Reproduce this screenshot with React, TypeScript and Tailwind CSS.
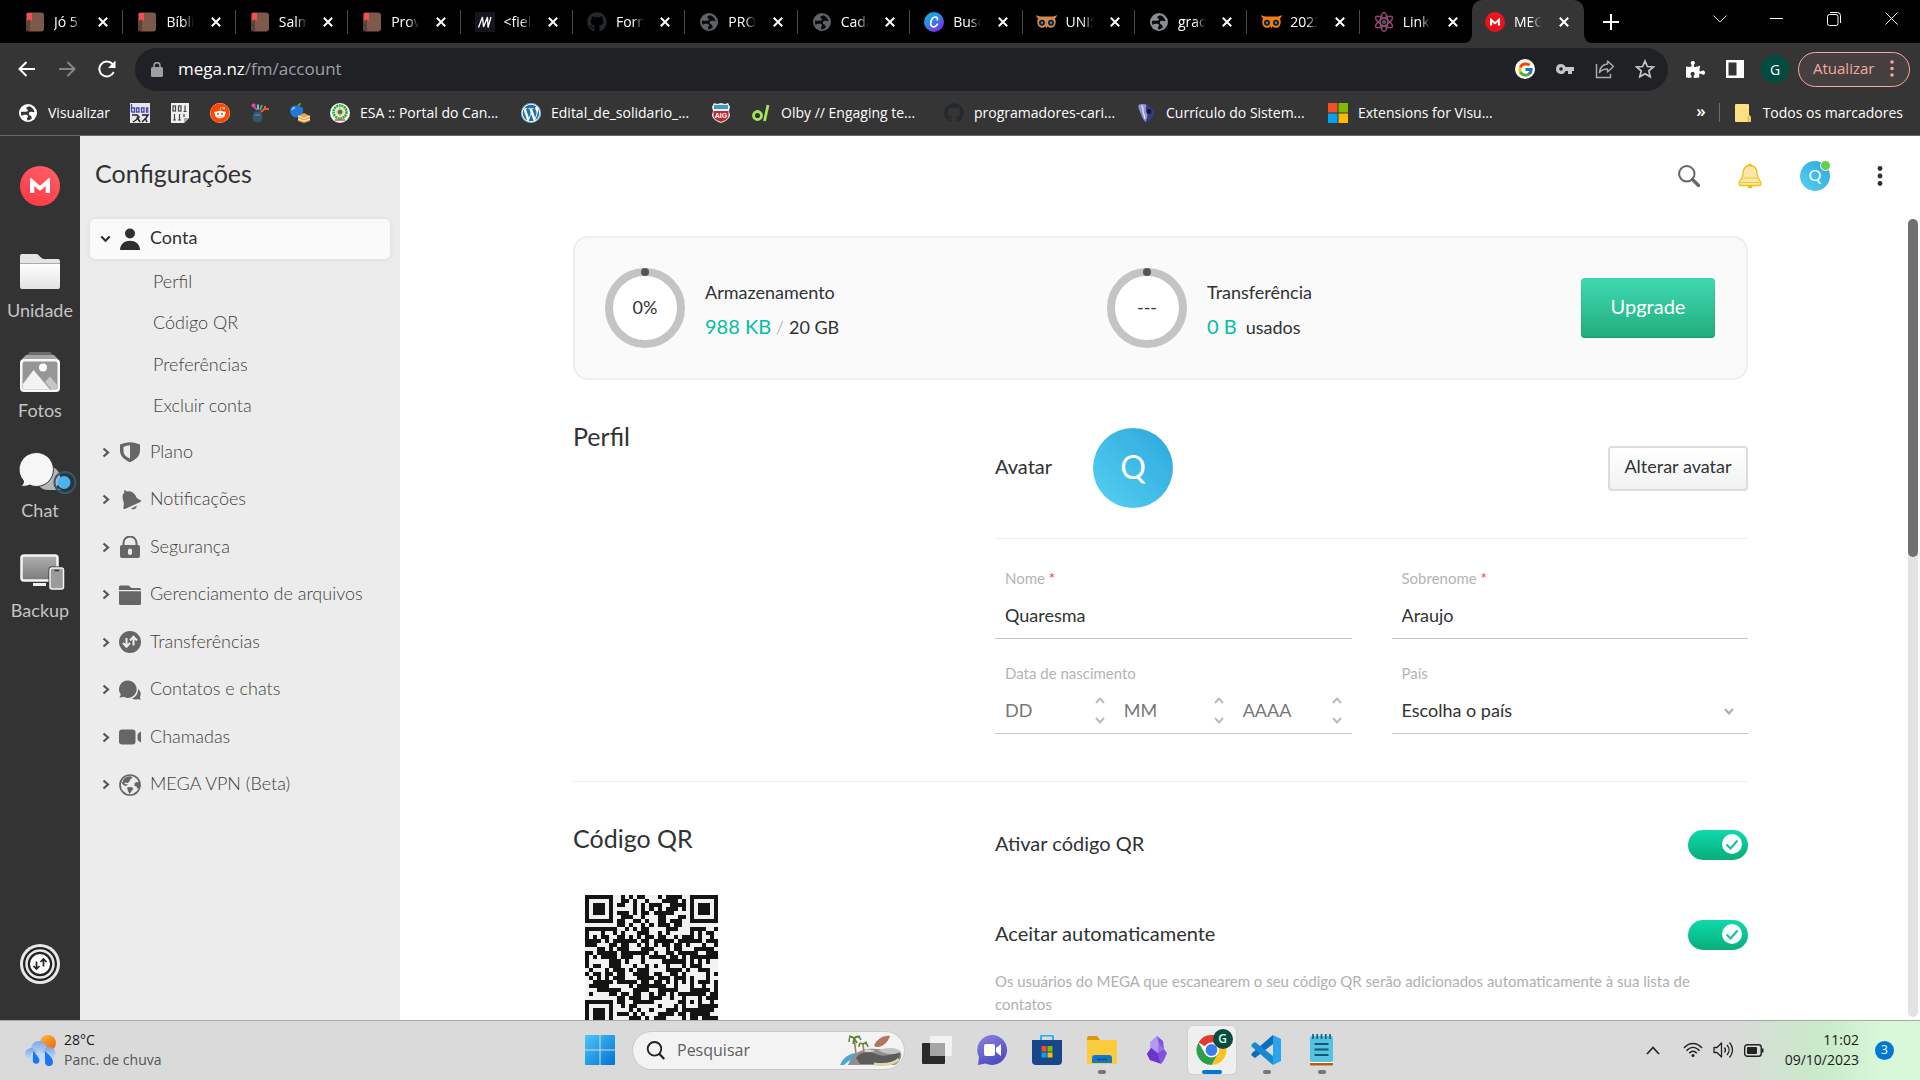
import React from "react";
import { FaGithub, FaReddit, FaWordpress, FaPuzzlePiece } from "react-icons/fa";
import { FcGoogle } from "react-icons/fc";

/* ---------- favicons ---------- */

const Book = () => (
  <svg width="18" height="20" viewBox="0 0 18 20">
    <rect x="0" y="0.5" width="18" height="19" rx="3" fill="#7d594c" />
    <path d="M0 4a3 3 0 0 1 3-3h1v18H3a3 3 0 0 1-3-3z" fill="#5d4037" />
    <path d="M1 1h5v8L3.500 7.500 1 9z" fill="#f4504f" />
  </svg>
);

const Mdn = () => (
  <svg width="20" height="20" viewBox="0 0 20 20">
    <rect width="20" height="20" fill="#15141f" />
    <path d="M3.500 15.500 7.500 5 8.500 15 12.500 5 13 15.500 16 5" stroke="#fff" strokeWidth="1.300" fill="none" strokeLinejoin="bevel" />
  </svg>
);

const Globe = ({ color = "#5f6368", land = "#0b0b0b" }: { color?: string; land?: string }) => (
  <svg width="18" height="18" viewBox="0 0 18 18">
    <circle cx="9" cy="9" r="9" fill={color} />
    <path d="M10 2.200c-1 .8-2.700.5-2.700 2 0 1.300 1.700 1 1.700 2.300 0 1.500-2.800 1.300-4.400 1.300H2.100C1.600 9 2 10.500 2.700 12 4 10.600 8.500 10.400 9 12c.3 1-1 1.300-1 2.500 0 .8.400 1.200.3 1.900 2-.1 3.700-1 4.700-2.400-.8-.6-.5-2-1.700-2.600-1-.4-1.600-1-1.500-2 .2-1.500 2.200-1.600 3.600-1.500l2.200.3C15 5.200 13 2.900 10 2.200z" fill={land} />
  </svg>
);

const Canva = () => (
  <svg width="20" height="20" viewBox="0 0 20 20">
    <defs>
      <linearGradient id="canva" x1="0" y1="0" x2="0.700" y2="1">
        <stop offset="0" stopColor="#00c4cc" />
        <stop offset="0.500" stopColor="#2f86e8" />
        <stop offset="1" stopColor="#7d2ae8" />
      </linearGradient>
    </defs>
    <circle cx="10" cy="10" r="10" fill="url(#canva)" />
    <path d="M13.500 12.200c-1 1.800-2.600 2.900-4.200 2.700-2-.2-2.900-2.200-2.500-4.600.5-3 2.500-5.300 4.700-5.300 1.700 0 2.400 1.300 1.800 2.800" stroke="#fff" strokeWidth="1.700" fill="none" strokeLinecap="round" />
  </svg>
);

const Owl = ({ color }: { color: string }) => (
  <svg width="21" height="14" viewBox="0 0 21 14">
    <path d="M0 0c3 2 6 1.500 10.500 1.500S18 2 21 0c-.5 2.500-1.500 3-2.200 3.500C20.600 6 20 12.500 15 12.800c-1.800 0-3-.8-3.500-1.600L10.500 13.500l-1-2.300C9 12 7.800 12.800 6 12.800 1 12.500.4 6 2.200 3.500 1.500 3 .5 2.500 0 0z" fill={color} />
    <circle cx="6" cy="7.700" r="3" fill="#10202e" />
    <circle cx="15" cy="7.700" r="3" fill="#10202e" />
    <circle cx="6" cy="7.700" r="1.200" fill="#5c7fa0" />
    <circle cx="15" cy="7.700" r="1.200" fill="#5c7fa0" />
  </svg>
);

const Atom = () => (
  <svg width="22" height="22" viewBox="0 0 22 22" fill="none" stroke="#8c4a72" strokeWidth="1.500">
    <ellipse cx="11" cy="11" rx="3.600" ry="9.600" />
    <ellipse cx="11" cy="11" rx="3.600" ry="9.600" transform="rotate(60 11 11)" />
    <ellipse cx="11" cy="11" rx="3.600" ry="9.600" transform="rotate(120 11 11)" />
    <circle cx="11" cy="11" r="2" fill="#47635c" stroke="none" />
  </svg>
);

const MegaMark = ({ size, id, from, to }: { size: number; id: string; from: string; to: string }) => (
  <svg width={size} height={size} viewBox="0 0 40 40">
    <defs>
      <linearGradient id={id} x1="0" y1="1" x2="0.500" y2="0">
        <stop offset="0" stopColor={from} />
        <stop offset="1" stopColor={to} />
      </linearGradient>
    </defs>
    <circle cx="20" cy="20" r="20" fill={`url(#${id})`} />
    <path d="M10 27V13.200c0-1 1-1.400 1.700-.8L20 19.800l8.300-7.400c.7-.6 1.700-.2 1.700.8V27h-4.300v-7l-4.900 4.300a1.200 1.200 0 0 1-1.600 0L14.300 20v7z" fill="#fff" />
  </svg>
);

/* ---------- browser chrome ---------- */

const tabs: { title: string; icon: React.ReactNode }[] = [
  { title: "Jó 5", icon: <Book /> },
  { title: "Bíbli", icon: <Book /> },
  { title: "Salm", icon: <Book /> },
  { title: "Prov", icon: <Book /> },
  { title: "<fiel", icon: <Mdn /> },
  { title: "Form", icon: <FaGithub size={20} color="#24292e" /> },
  { title: "PRO", icon: <Globe /> },
  { title: "Cada", icon: <Globe /> },
  { title: "Busc", icon: <Canva /> },
  { title: "UNIS", icon: <Owl color="#d08a50" /> },
  { title: "grad", icon: <Globe color="#8a8d91" /> },
  { title: "2023", icon: <Owl color="#f47b16" /> },
  { title: "Link", icon: <Atom /> },
];

const CloseX = () => (
  <svg width="10" height="10" viewBox="0 0 10 10">
    <path d="M.8.8l8.400 8.400M9.200.8.800 9.200" stroke="#fff" strokeWidth="2" />
  </svg>
);

const TabBody = ({ title, icon }: { title: string; icon: React.ReactNode }) => (
  <>
    <span className="flex w-[22px] shrink-0 justify-center">{icon}</span>
    <span className="ml-2 w-7 overflow-hidden whitespace-nowrap text-[14px] leading-5 text-white [mask-image:linear-gradient(to_right,#000_60%,transparent)]">
      {title}
    </span>
    <button aria-label={`Fechar ${title}`} className="ml-auto flex size-5 items-center justify-center">
      <CloseX />
    </button>
  </>
);

const TabStrip = () => (
  <div className="flex h-[43px] shrink-0 bg-black pl-[11px]">
    <div className="flex w-[1461px] shrink">
      {tabs.map((t, i) => (
        <div key={t.title} className="flex min-w-0 flex-1 items-center">
          <div className="flex w-full items-center pr-[9px] pl-[13px]">
            <TabBody {...t} />
          </div>
          {i < tabs.length - 1 && <span className="h-6 w-px shrink-0 bg-[#4a4a4a]" />}
        </div>
      ))}
    </div>
    <div className="relative flex w-[112px] shrink-0 items-center rounded-t-[10px] bg-[#353535] pr-[10px] pl-3">
      <svg className="absolute bottom-0 -left-2" width="8" height="8" viewBox="0 0 8 8"><path d="M8 0v8H0a8 8 0 0 0 8-8z" fill="#353535" /></svg>
      <svg className="absolute -right-2 bottom-0" width="8" height="8" viewBox="0 0 8 8"><path d="M0 0v8h8a8 8 0 0 1-8-8z" fill="#353535" /></svg>
      <TabBody title="MEG" icon={<MegaMark size={20} id="favMega" from="#e0101a" to="#ee1520" />} />
    </div>
    <button aria-label="Nova guia" className="ml-[7px] flex w-10 shrink-0 items-center justify-center">
      <svg width="16" height="16" viewBox="0 0 16 16"><path d="M8 0v16M0 8h16" stroke="#fff" strokeWidth="2" /></svg>
    </button>
    <div className="mb-[6px] ml-auto flex shrink-0 items-center">
      <button aria-label="Pesquisar guias" className="flex w-[57px] justify-center">
        <svg width="14" height="8" viewBox="0 0 14 8"><path d="M.5.5 7 7 13.500.5" stroke="#ddd" fill="none" /></svg>
      </button>
      <button aria-label="Minimizar" className="flex w-[57px] justify-center">
        <span className="h-px w-[13px] bg-white" />
      </button>
      <button aria-label="Restaurar" className="flex w-[57px] justify-center">
        <svg width="14" height="14" viewBox="0 0 14 14" fill="none" stroke="#fff">
          <rect x=".5" y="2.500" width="10.500" height="11" rx="2" />
          <path d="M3 .5h7.500a3 3 0 0 1 3 3V11" />
        </svg>
      </button>
      <button aria-label="Fechar" className="flex w-[58px] justify-center">
        <svg width="13" height="13" viewBox="0 0 13 13"><path d="M.5.5l12 12M12.500.5l-12 12" stroke="#fff" /></svg>
      </button>
    </div>
  </div>
);

const Toolbar = () => (
  <div className="flex h-[53px] shrink-0 items-center bg-[#353535] pr-[10px] pb-px pl-[7px]">
    <button aria-label="Voltar" className="flex w-10 justify-center">
      <svg width="18" height="16" viewBox="0 0 18 16" fill="none" stroke="#fff" strokeWidth="2"><path d="M17 8H2M8.500 1 1.500 8l7 7" /></svg>
    </button>
    <button aria-label="Avançar" className="flex w-10 justify-center">
      <svg width="18" height="16" viewBox="0 0 18 16" fill="none" stroke="#868686" strokeWidth="2"><path d="M1 8h15M9.500 1l7 7-7 7" /></svg>
    </button>
    <button aria-label="Recarregar" className="flex w-10 justify-center">
      <svg width="18" height="18" viewBox="0 0 18 18"><path d="M15.700 12A7.500 7.500 0 1 1 14.500 4" fill="none" stroke="#fff" strokeWidth="2" /><path d="M17.500.5v7.500H10z" fill="#fff" /></svg>
    </button>
    <div className="ml-2 flex h-[43px] flex-1 items-center rounded-full bg-[#202124] pr-[13px] pl-4">
      <svg width="12" height="15" viewBox="0 0 12 15"><rect x="0" y="5" width="12" height="10" rx="1.500" fill="#9aa0a6" /><path d="M3 6V3.700a3 3 0 0 1 6 0V6" stroke="#9aa0a6" strokeWidth="1.500" fill="none" /></svg>
      <div className="relative ml-[15px] h-6 flex-1 text-[17px] leading-6">
        <input aria-label="Barra de endereço" defaultValue="mega.nz/fm/account" className="w-full bg-transparent text-[#9aa0a6] outline-none" />
        <span aria-hidden="true" className="pointer-events-none absolute top-0 left-0 bg-[#202124] text-white">mega.nz</span>
      </div>
      <div className="flex items-center gap-5">
        <span className="flex size-5 items-center justify-center rounded-full bg-white"><FcGoogle size={17} /></span>
        <svg width="20" height="12" viewBox="0 0 20 12"><path d="M6 1a5 5 0 1 0 4.600 7H13v3h4V8h2V4h-8.400A5 5 0 0 0 6 1zm0 3.200a1.800 1.800 0 1 1 0 3.600 1.800 1.800 0 0 1 0-3.600z" fill="#c4c7ca" /></svg>
        <svg width="20" height="20" viewBox="0 0 20 20" fill="none" stroke="#a8abae" strokeWidth="1.500"><path d="M1.500 5v13.500h14V15" /><path d="M12.500 2l6 5.500-6 5.500V10c-3.500 0-6 .8-8 3.500C5 9 7.500 5.300 12.500 5z" strokeLinejoin="round" /></svg>
        <svg width="20" height="20" viewBox="0 0 20 20" fill="none" stroke="#c4c7ca" strokeWidth="1.700"><path d="M10 2l2.400 5.500 6 .5-4.600 3.900 1.400 5.900L10 14.700l-5.200 3.100 1.400-5.900L1.600 8l6-.5z" /></svg>
      </div>
    </div>
    <div className="ml-[17px] flex items-center">
      <button aria-label="Extensões" className="flex w-5 justify-center"><FaPuzzlePiece size={19} color="#fff" /></button>
      <button aria-label="Painel lateral" className="ml-5 flex w-5 justify-center">
        <svg width="18" height="18" viewBox="0 0 18 18"><path d="M0 0h18v18H0zM2.500 2.500v13h8v-13z" fill="#fff" fillRule="evenodd" /></svg>
      </button>
      <button aria-label="Perfil do Chrome" className="ml-4 flex size-7 items-center justify-center rounded-full bg-[#004d40] text-[14px] text-white">G</button>
      <button className="ml-[9px] flex h-[35px] w-[112px] items-center justify-between rounded-full border border-[#f2aaa2] bg-[#463f40] pr-[15px] pb-px pl-[14px] text-[15px] text-[#f2aaa2]">
        Atualizar
        <svg width="4" height="17" viewBox="0 0 4 17" fill="#f2aaa2"><circle cx="2" cy="2" r="1.800" /><circle cx="2" cy="8.500" r="1.800" /><circle cx="2" cy="15" r="1.800" /></svg>
      </button>
    </div>
  </div>
);

const Bookmark = ({ icon, label, width }: { icon: React.ReactNode; label?: string; width: string }) => (
  <a href="#" aria-label={label ?? "Favorito"} className={`flex shrink-0 items-center ${width}`}>
    <span className="flex w-5 shrink-0 justify-center">{icon}</span>
    {label && <span className="ml-[10px] whitespace-nowrap">{label}</span>}
  </a>
);

const Bookmarks = () => (
  <div className="flex h-[40px] shrink-0 items-center border-b border-[#6a6a6a] bg-[#353535] pb-[6px] pl-[18px] text-[14px] leading-5 text-white">
    <Bookmark width="w-[112px]" icon={<Globe color="#fff" land="#353535" />} label="Visualizar" />
    <Bookmark width="w-10" icon={
      <svg width="20" height="20" viewBox="0 0 20 20"><rect width="20" height="20" fill="#e6e6ee" /><path d="M1.500 1v8M1.500 5h3v4h-3M6.500 5h2.500v4H6.500zM11.500 5v4h2.500V5zM18.500 5h-2v4h2M16.500 7h2" stroke="#4a45b0" strokeWidth="1.300" fill="none" /><path d="M2 12h5l2 2-3 3-3 2M7 14l3 5M12 12h6l-2 3-4 4M15 15l2 4" stroke="#222" strokeWidth="1.500" fill="none" /></svg>} />
    <Bookmark width="w-10" icon={
      <svg width="18" height="20" viewBox="0 0 18 20"><path d="M0 0h18v15l-5 5H0z" fill="#efefef" /><path d="M13 20v-5h5z" fill="#aaa" /><g stroke="#444" strokeWidth="1.200" fill="none"><rect x="2" y="3" width="2.500" height="5" /><rect x="7.500" y="3" width="2.500" height="5" /><path d="M14 2.500v6M3.500 11v6M8.500 11v6M13 11v3M12.500 8.500h3M2 17h3M7 17h3" /></g></svg>} />
    <Bookmark width="w-10" icon={<span className="flex size-5 items-center justify-center rounded-full bg-white"><FaReddit size={20} color="#ff4500" /></span>} />
    <Bookmark width="w-10" icon={
      <svg width="20" height="20" viewBox="0 0 20 20"><path d="M4 8.500h7c-.5 1.500.5 2.500 1.200 3.800C13.500 16 11 19.500 7.500 19.500S1.500 16 2.800 12.300C3.500 11 4.500 10 4 8.500z" fill="#33566b" /><path d="M4.500 12h6" stroke="#4fa0b8" /><circle cx="3.500" cy="2.500" r="2" fill="#d94ea8" /><path d="M7 7 4 3.500" stroke="#d94ea8" strokeWidth="1.700" /><path d="M8 6.500V1.500" stroke="#7fb8e8" strokeWidth="2" /><path d="M10 7l2-5" stroke="#4cb45a" strokeWidth="2" /><path d="M11 9l4-3.500M15 3v3h4" stroke="#ec5a3c" strokeWidth="2" fill="none" /></svg>} />
    <Bookmark width="w-10" icon={
      <svg width="20" height="20" viewBox="0 0 20 20"><path d="M8 3c1 .5 3 0 4.500 1.500S13 10 12 11.500 7 15 5 14.500 0 10.500 0 8s1.500-5 4-5.300C5.500 2.500 7 2.700 8 3z" fill="#2079d6" /><path d="M2 7c.5-1.500 1.500-2.300 3-2.500" stroke="#9fd0ff" strokeWidth="1.300" fill="none" /><path d="M7.500 3C7.500 1.500 9 0 11 0c0 2-1 3-3.500 3z" fill="#68b33c" /><path d="M8 13l6-3 6 3v5l-6 2-6-2z" fill="#e6a755" /><path d="M8 13l6 2.500 6-2.500M8 16l6 2 6-2" stroke="#fff1c9" fill="none" /></svg>} />
    <Bookmark width="w-[191px]" label="ESA :: Portal do Can..." icon={
      <svg width="20" height="20" viewBox="0 0 20 20"><circle cx="10" cy="10" r="10" fill="#f5f5f0" /><circle cx="10" cy="9" r="6.500" fill="#d9efd9" stroke="#2da34a" strokeWidth="2.500" strokeDasharray="2 .6" /><path d="M10 4l4 5-4 5-4-5z" fill="#f4c531" /><circle cx="10" cy="9" r="2.200" fill="#3a63b8" /><path d="M5 17h10" stroke="#c34" strokeWidth="1.300" /></svg>} />
    <Bookmark width="w-[190px]" label="Edital_de_solidario_..." icon={<span className="flex size-5 items-center justify-center rounded-full bg-white"><FaWordpress size={20} color="#1f73aa" /></span>} />
    <Bookmark width="w-10" icon={
      <svg width="18" height="20" viewBox="0 0 18 20"><path d="M2 0l3 1 4-1 4 1 3-1 2 4-1 4 1 4c0 4-6 7-9 8-3-1-9-4-9-8l1-4-1-4z" fill="#e9eef2" /><path d="M2 2h14v4H2z" fill="#3a9bc4" /><path d="M1.500 8h15v5c0 3-5 5-7.500 6-2.500-1-7.500-3-7.500-6z" fill="#c1272d" /><text x="9" y="14.500" fontSize="7" fontWeight="700" fill="#fff" textAnchor="middle" fontFamily="Liberation Sans, sans-serif">AIG</text></svg>} />
    <Bookmark width="w-[193px]" label="Olby // Engaging te..." icon={
      <svg width="18" height="18" viewBox="0 0 18 18" fill="none" stroke="#a5e65a" strokeWidth="2.800"><circle cx="5.500" cy="11.500" r="4" /><path d="M12.500 17 16 1" /></svg>} />
    <Bookmark width="w-[192px]" label="programadores-cari..." icon={<FaGithub size={20} color="#24292e" />} />
    <Bookmark width="w-[192px]" label="Currículo do Sistem..." icon={
      <svg width="18" height="20" viewBox="0 0 18 20"><path d="M1 2c4-2.500 8-1.500 11 1 4 3 6 6 4.500 9.500S12 18 9 19.500c-2-1-4-4-5-8C2.500 9 .5 6 1 2z" fill="#3b3a86" /><path d="M1.500 2c3-1.500 6-1 8 0-1 3-1 6 1 9 0 3-1 5-2 8-2-2-3.500-5-4.500-8C3 8 1 5 1.500 2z" fill="#8f94cc" /><path d="M4 3c2 0 2 3 2 5s2 5 2 8" stroke="#e6e8fa" strokeWidth="1.200" fill="none" /><circle cx="12" cy="8.500" r="2.500" fill="#17143f" /></svg>} />
    <Bookmark width="w-[200px]" label="Extensions for Visu..." icon={
      <svg width="20" height="20" viewBox="0 0 20 20"><path d="M0 0h9.500v9.500H0z" fill="#f25022" /><path d="M10.500 0H20v9.500h-9.500z" fill="#7fba00" /><path d="M0 10.500h9.500V20H0z" fill="#00a4ef" /><path d="M10.500 10.500H20V20h-9.500z" fill="#ffb900" /></svg>} />
    <div className="ml-auto flex items-center pr-[17px]">
      <button aria-label="Mais favoritos" className="pb-[3px] text-[17px] leading-5 font-semibold">»</button>
      <span className="ml-[13px] h-[19px] w-px bg-[#6c6c6c]" />
      <a href="#" className="ml-[15px] flex items-center">
        <svg width="16" height="18" viewBox="0 0 16 18"><path d="M1 0h12a1 1 0 0 1 1 1v10l2 2v4a1 1 0 0 1-1 1H1a1 1 0 0 1-1-1V1a1 1 0 0 1 1-1z" fill="#ffdf84" /><path d="M14 11l2 2v4a1 1 0 0 1-1 1h-3v-5z" fill="#f1c75a" /></svg>
        <span className="ml-3">Todos os marcadores</span>
      </a>
    </div>
  </div>
);

/* ---------- MEGA left rail ---------- */

const RailFolder = () => (
  <svg width="40" height="38" viewBox="0 0 40 38">
    <defs><linearGradient id="paper" x1="0" y1="0" x2="0" y2="1"><stop offset="0" stopColor="#fff" /><stop offset="1" stopColor="#e2e2e2" /></linearGradient></defs>
    <path d="M0 3a2 2 0 0 1 2-2h14c1.500 0 2.200.6 3.200 1.700L21 4.600c1 1 1.600 1.400 3 1.400h14a2 2 0 0 1 2 2v2H0z" fill="#e4e4e4" />
    <path d="M0 11h40v23a2 2 0 0 1-2 2H2a2 2 0 0 1-2-2z" fill="url(#paper)" />
    <path d="M0 10.500h40" stroke="#aaa" />
  </svg>
);

const RailPhotos = () => (
  <svg width="40" height="42" viewBox="0 0 40 42">
    <path d="M10 1h20l4 4H6z" fill="#6c6c6c" /><path d="M6 4h28l4 4H2z" fill="#a4a4a4" />
    <rect y="8" width="40" height="33" rx="4" fill="#f7f7f7" />
    <rect x="2.500" y="10.500" width="35" height="28" rx="2.500" fill="#969696" />
    <path d="M3 33 13.500 19 30 38.500H5a2 2 0 0 1-2-2z" fill="#f3f3f3" />
    <path d="M25 31l5-5.500 7 8.500v2a2 2 0 0 1-2 2h-4z" fill="#c6c6c6" />
    <circle cx="23" cy="16.500" r="4" fill="#fff" />
  </svg>
);

const RailChat = () => (
  <svg className="ml-4" width="58" height="44" viewBox="0 0 58 44">
    <circle cx="29" cy="28" r="12" fill="#b5b5b5" /><path d="M34 36l8 4-14 0z" fill="#b5b5b5" />
    <path d="M17.500 2.500a17 17 0 1 1-7 32.500C8 36.500 4 36.500 2 36c2-1.500 2.500-3 2.500-5A17 17 0 0 1 17.500 2.500z" fill="#f6f6f6" stroke="#333" strokeWidth="1" />
    <circle cx="46" cy="32.500" r="10.500" fill="none" stroke="#2b5b75" strokeWidth="2" />
    <circle cx="45" cy="32.500" r="6.500" fill="#4ab4f2" />
  </svg>
);

const RailBackup = () => (
  <svg className="ml-1" width="45" height="38" viewBox="0 0 45 38">
    <defs><linearGradient id="screen" x1="0" y1="0" x2="0" y2="1"><stop offset="0" stopColor="#b0b0b0" /><stop offset="1" stopColor="#7b7b7b" /></linearGradient></defs>
    <rect x="1.500" y="2.500" width="36" height="25" rx="2.500" fill="url(#screen)" stroke="#f5f5f5" strokeWidth="2.500" />
    <path d="M13 31.500h13" stroke="#f0f0f0" strokeWidth="3" />
    <rect x="28.500" y="13.500" width="15" height="23" rx="3" fill="#333" />
    <rect x="30" y="15" width="13.500" height="21" rx="2" fill="#9b9b9b" stroke="#f5f5f5" strokeWidth="1.500" />
    <path d="M34.500 17.500h4.500" stroke="#333" strokeWidth="1.500" />
  </svg>
);

const rail = [
  { label: "Unidade", icon: <RailFolder /> },
  { label: "Fotos", icon: <RailPhotos /> },
  { label: "Chat", icon: <RailChat /> },
  { label: "Backup", icon: <RailBackup /> },
];

const Rail = () => (
  <nav aria-label="MEGA" className="flex w-20 shrink-0 flex-col items-center bg-[#333] pt-[30px] pb-9">
    <a href="#" aria-label="MEGA"><MegaMark size={40} id="railMega" from="#ff3640" to="#ff5a63" /></a>
    <div className="mt-[41px] flex w-full flex-col">
      {rail.map((r) => (
        <a key={r.label} href="#" className="flex h-[100px] flex-col items-center">
          <span className="flex h-[50px] items-center justify-center">{r.icon}</span>
          <span className="mt-px text-[18px] leading-6 text-[#c4c4c4]">{r.label}</span>
        </a>
      ))}
    </div>
    <button aria-label="Transferências" className="mt-auto">
      <svg width="40" height="40" viewBox="0 0 40 40">
        <circle cx="20" cy="20" r="20" fill="#e8e8e8" />
        <circle cx="20" cy="20" r="17" fill="#222" />
        <circle cx="20" cy="20" r="13.500" fill="none" stroke="#e8e8e8" strokeWidth="2.500" />
        <circle cx="20" cy="20" r="10" fill="#fff" />
        <path d="M16.500 17.500v7M13.500 22l3 3 3-3M23.500 22.500v-7M20.500 18l3-3 3 3" stroke="#222" strokeWidth="1.700" fill="none" />
      </svg>
    </button>
  </nav>
);

/* ---------- settings menu ---------- */

const Ico = ({ children }: { children: React.ReactNode }) => (
  <svg width="22" height="22" viewBox="0 0 22 22" fill="#666">{children}</svg>
);

const menu: { label: string; icon: React.ReactNode }[] = [
  { label: "Plano", icon: <Ico><path fillRule="evenodd" d="M1 3.500C4 2.500 7.500 1.300 11 1.300s7 1.200 10 2.200v6c0 5.500-4 9-10 11.700C5 18.500 1 15 1 9.500zM4.500 6v4c0 3.500 2 5.500 6.500 7.500V4.200c-2 0-4.500.8-6.500 1.800z" /></Ico> },
  { label: "Notificações", icon: <Ico><path d="M5 1.500c1-.5 2 .2 2.500 1 4-1 8 1 9.500 5 .7 2 2.500 3 4.500 3.500.8.400.6 1.500-.2 1.900L6 20c-1 .4-2-.5-1.700-1.500C5 16 5 14 4.300 12 3 8 3.200 5 5.500 3.200z" /><path d="M12 19.800l5.500-3c.7 2.400-2.700 4.500-5.500 3z" /></Ico> },
  { label: "Segurança", icon: <Ico><path d="M4.500 9V7a6.500 6.500 0 0 1 13 0v2" stroke="#666" strokeWidth="2" fill="none" /><path fillRule="evenodd" d="M3 9h16a2 2 0 0 1 2 2v9a2 2 0 0 1-2 2H3a2 2 0 0 1-2-2v-9a2 2 0 0 1 2-2zm8 3.500a2 2 0 0 0-2 2V17a2 2 0 0 0 4 0v-2.500a2 2 0 0 0-2-2z" /></Ico> },
  { label: "Gerenciamento de arquivos", icon: <Ico><path d="M0 3a1.500 1.500 0 0 1 1.500-1.500h8l3 2.500h8A1.500 1.500 0 0 1 22 5.500V6H0zM0 7.200h22v12.300a1.500 1.500 0 0 1-1.500 1.500h-19A1.500 1.500 0 0 1 0 19.500z" /></Ico> },
  { label: "Transferências", icon: <Ico><circle cx="11" cy="11" r="11" /><path d="M7.500 7v8.500M4 12l3.500 3.800L11 12M14.500 14.500V6M11 9.500l3.500-3.800L18 9.500" stroke="#ececec" strokeWidth="2" fill="none" /></Ico> },
  { label: "Contatos e chats", icon: <Ico><path d="M9 1.500a8.700 8.700 0 1 1-4.500 16.200C3 18.500 1.500 18.500.3 18.300c1-.8 1.400-1.800 1.400-3A8.700 8.700 0 0 1 9 1.500z" /><path d="M19 10c4 3 2.500 7 2 8 0 1 .5 2 1 2.500-1 .3-2.200 0-3-.5-2 1-4.500.7-6-.5 3.500-1.200 6-4.500 6-9.500z" /></Ico> },
  { label: "Chamadas", icon: <Ico><rect x="0" y="3.500" width="16.500" height="15" rx="3" /><path d="M18.500 9c.5-1.500 1.500-2.800 3.500-3.500v11c-2-.7-3-2-3.500-3.500z" /></Ico> },
  { label: "MEGA VPN (Beta)", icon: <Ico><circle cx="11" cy="11" r="10" fill="none" stroke="#666" strokeWidth="1.700" /><path d="M4.500 5.500C6.500 3 9 2 12 2.200L13.500 4l-2 1-1 2.500L8.500 9 6 8.500 5.500 10 9 10.500l-2 1.500C5 11.500 3.500 10.500 3 9zM8 13.500c2-1 6-.5 6.500 1L12 18l-1.500 2L9 17zM15.500 9.500c1.500-2 4-2 5.300-.5v4l-2.300 2-1-2.500-2-.5z" /></Ico> },
];

const Caret = () => (
  <svg width="8" height="11" viewBox="0 0 8 11"><path d="M1.500 1.500l4.500 4-4.500 4" stroke="#555" strokeWidth="2.200" fill="none" /></svg>
);

const Menu = () => (
  <aside className="flex w-80 shrink-0 flex-col bg-[#ececec] px-[10px] text-[18px] font-light text-[#404040]">
    <h1 className="mt-[21px] ml-[5px] text-[25px] leading-8 font-normal text-[#303233]">Configurações</h1>
    <a href="#" className="mt-[30px] flex h-10 items-center rounded-[5px] bg-[#fafafa] pl-[10px] font-normal text-[#303233] shadow-[0_0_6px_rgba(0,0,0,0.08)]">
      <svg width="11" height="8" viewBox="0 0 11 8"><path d="M1.300 1.500l4.200 4.200L9.700 1.500" stroke="#303030" strokeWidth="2.200" fill="none" /></svg>
      <svg className="ml-[9px]" width="20" height="22" viewBox="0 0 20 22" fill="#303030"><circle cx="10" cy="5.500" r="5" /><path d="M0 22c0-12.500 20-12.500 20 0z" /></svg>
      <span className="ml-[10px] pb-[3px]">Conta</span>
    </a>
    <ul className="mt-[2px] flex h-[165px] flex-col justify-between pl-[63px]">
      {["Perfil", "Código QR", "Preferências", "Excluir conta"].map((s) => (
        <li key={s}><a href="#" className="flex h-[41px] items-center">{s}</a></li>
      ))}
    </ul>
    <ul className="mt-[6px] flex h-[373px] flex-col justify-between">
      {menu.map((m) => (
        <li key={m.label}>
          <a href="#" className="flex h-10 items-center pl-3">
            <Caret />
            <span className="ml-[9px]">{m.icon}</span>
            <span className="ml-[9px] pb-[2px]">{m.label}</span>
          </a>
        </li>
      ))}
    </ul>
  </aside>
);

/* ---------- main content ---------- */

const TopIcons = () => (
  <div className="flex h-[83px] shrink-0 items-center justify-end pr-[37px] pb-1">
    <button aria-label="Pesquisar" className="mr-[38px]">
      <svg width="22" height="22" viewBox="0 0 22 22" fill="none" stroke="#666"><circle cx="8.800" cy="8.800" r="7.700" strokeWidth="2" /><path d="M14.500 14.500l6 6" strokeWidth="3.200" strokeLinecap="round" /></svg>
    </button>
    <button aria-label="Notificações" className="mr-[38px]">
      <svg width="24" height="26" viewBox="0 0 24 26"><circle cx="12" cy="23" r="2.500" fill="#f0bf1a" /><circle cx="12" cy="2.500" r="2" fill="#f0bf1a" /><path d="M12 2.500c4.500 0 7 3.500 7 7.500 0 4.500 1.300 6 3.200 8.200 1.500 1.800.8 4.300-1.200 4.300H3c-2 0-2.700-2.500-1.200-4.300C3.700 16 5 14.500 5 10c0-4 2.500-7.500 7-7.500z" fill="#fae8a4" stroke="#f0bf1a" strokeWidth="1.300" /><path d="M4.500 15h15M2 19.500h20" stroke="#f0c73a" strokeWidth="1" /></svg>
    </button>
    <button aria-label="Conta" className="relative mr-[47px] flex size-[30px] items-center justify-center rounded-full bg-linear-to-tr from-[#55d2f0] to-[#2ba6de] pb-[2px] text-[16px] text-white">
      Q
      <span className="absolute -top-px -right-px size-[11px] rounded-full border border-white bg-[#61d046]" />
    </button>
    <button aria-label="Mais opções">
      <svg width="6" height="20" viewBox="0 0 6 20" fill="#303030"><circle cx="3" cy="2.500" r="2.400" /><circle cx="3" cy="10" r="2.400" /><circle cx="3" cy="17.500" r="2.400" /></svg>
    </button>
  </div>
);

const Ring = ({ label }: { label: string }) => (
  <div className="relative flex size-20 shrink-0 items-center justify-center rounded-full border-[8px] border-[#c4c4c4] bg-white pb-px text-[18px] text-[#303233]">
    {label}
    <span className="absolute -top-2 size-2 rounded-full bg-[#555]" />
  </div>
);

const UsageCard = () => (
  <section className="mt-[17px] flex h-36 items-center rounded-[15px] border-2 border-[#eee] bg-[#fafafa] pr-[31px] pl-[30px] text-[#303233]">
    <div className="flex w-[502px] items-center">
      <Ring label="0%" />
      <div className="ml-5 pt-[5px]">
        <div className="text-[18px] leading-6">Armazenamento</div>
        <div className="mt-2 flex items-baseline leading-7">
          <span className="text-[20px] text-[#00bfa5]">988 KB</span>
          <span className="mx-[5px] text-[18px] font-light text-[#999]">/</span>
          <span className="text-[18px]">20 GB</span>
        </div>
      </div>
    </div>
    <div className="flex items-center">
      <Ring label="---" />
      <div className="ml-5 pt-[5px]">
        <div className="text-[18px] leading-6">Transferência</div>
        <div className="mt-2 flex items-baseline leading-7">
          <span className="text-[20px] text-[#00bfa5]">0 B</span>
          <span className="ml-[9px] text-[18px]">usados</span>
        </div>
      </div>
    </div>
    <button className="ml-auto h-[60px] w-[134px] rounded-[4px] bg-linear-to-b from-[#41d9b3] to-[#1fae7b] pb-1 text-[20px] text-white shadow-[inset_0_-1px_2px_rgba(0,0,0,0.15)]">Upgrade</button>
  </section>
);

const Stepper = ({ label }: { label: string }) => (
  <div className="flex h-8 w-5 flex-col items-center justify-between">
    <button type="button" aria-label={`Aumentar ${label}`} className="flex h-3 w-4 items-center justify-center">
      <svg width="10" height="7" viewBox="0 0 10 7"><path d="M1 6l4-4.500L9 6" stroke="#bbb" strokeWidth="2" fill="none" /></svg>
    </button>
    <button type="button" aria-label={`Diminuir ${label}`} className="flex h-3 w-4 items-center justify-center">
      <svg width="10" height="7" viewBox="0 0 10 7"><path d="M1 1l4 4.500L9 1" stroke="#bbb" strokeWidth="2" fill="none" /></svg>
    </button>
  </div>
);

const labelCls = "block pl-[10px] text-[15px] leading-6 text-[#b4b4b4]";

const TextField = ({ id, label, value }: { id: string; label: string; value: string }) => (
  <div>
    <label htmlFor={id} className={labelCls}>{label} <span className="text-[#ff333a]">*</span></label>
    <input id={id} defaultValue={value} className="h-[49px] w-full border-b border-[#c4c4c4] pt-[2px] pl-[10px] text-[18px] text-[#303233] outline-none" />
  </div>
);

const ProfileForm = () => (
  <form className="mt-[27px] grid grid-cols-2 gap-x-10 gap-y-[22px]">
    <TextField id="nome" label="Nome" value="Quaresma" />
    <TextField id="sobrenome" label="Sobrenome" value="Araujo" />
    <fieldset>
      <legend className={labelCls}>Data de nascimento</legend>
      <div className="flex h-[49px] border-b border-[#c4c4c4] pt-[2px]">
        {[["DD", "dia"], ["MM", "mês"], ["AAAA", "ano"]].map(([ph, name]) => (
          <div key={ph} className="flex min-w-0 flex-1 items-center pr-1 pl-[10px]">
            <input aria-label={name} placeholder={ph} className="w-full min-w-0 flex-1 text-[18px] outline-none placeholder:text-[#777]" />
            <Stepper label={name} />
          </div>
        ))}
      </div>
    </fieldset>
    <div>
      <label htmlFor="pais" className={labelCls}>País</label>
      <div className="relative">
        <select id="pais" className="h-[49px] w-full appearance-none border-b border-[#c4c4c4] bg-transparent pt-[2px] pl-[10px] text-[18px] text-[#303233] outline-none">
          <option>Escolha o país</option>
        </select>
        <svg className="pointer-events-none absolute top-[23px] right-[14px]" width="10" height="7" viewBox="0 0 10 7"><path d="M1 1l4 4.500L9 1" stroke="#aaa" strokeWidth="2" fill="none" /></svg>
      </div>
    </div>
  </form>
);

const Toggle = ({ id, label }: { id: string; label: string }) => (
  <div className="flex h-[30px] items-center justify-between">
    <label htmlFor={id} className="pb-1 text-[20px] leading-[26px]">{label}</label>
    <span className="relative block h-[30px] w-[60px]">
      <input id={id} type="checkbox" role="switch" defaultChecked className="h-[30px] w-[60px] appearance-none rounded-full bg-linear-to-b from-[#0fd9ac] to-[#07ae7a]" />
      <span className="pointer-events-none absolute top-1 right-[6px] flex size-5 items-center justify-center rounded-full bg-white">
        <svg width="14" height="11" viewBox="0 0 14 11"><path d="M1.500 5.500l4 4 7-8" stroke="#0cc499" strokeWidth="2" fill="none" /></svg>
      </span>
    </span>
  </div>
);

const N = 33;
const finder = (x: number, y: number): boolean | null => {
  for (const [fx, fy] of [[0, 0], [N - 7, 0], [0, N - 7]]) {
    const dx = x - fx;
    const dy = y - fy;
    if (dx >= -1 && dx <= 7 && dy >= -1 && dy <= 7) {
      if (dx < 0 || dy < 0 || dx > 6 || dy > 6) return false;
      const r = Math.max(Math.abs(dx - 3), Math.abs(dy - 3));
      return r !== 2;
    }
  }
  const r = Math.max(Math.abs(x - 26), Math.abs(y - 26));
  if (r <= 2) return r !== 1;
  return null;
};
const qrPath = (() => {
  let seed = 987;
  let d = "";
  for (let y = 0; y < N; y++)
    for (let x = 0; x < N; x++) {
      seed = (seed * 1103515245 + 12345) % 2147483648;
      const f = finder(x, y);
      if (f ?? seed / 2147483648 > 0.45) d += `M${x} ${y}h1v1h-1z`;
    }
  return d;
})();

const Main = () => (
  <main className="relative flex min-w-0 flex-1 flex-col bg-white text-[#303233]">
    <TopIcons />
    <div className="min-h-0 flex-1 overflow-hidden">
      <div className="mx-auto w-full max-w-[1176px] pl-px">
        <UsageCard />
        <section className="mt-[39px] flex border-b border-[#eee] pb-[47px]">
          <h2 className="w-[422px] shrink-0 text-[25px] leading-[34px]">Perfil</h2>
          <div className="flex-1 pt-[9px]">
            <div className="flex items-center border-b border-[#eee] pb-[30px]">
              <span className="w-[98px] pb-1 text-[20px]">Avatar</span>
              <span className="flex size-20 items-center justify-center rounded-full bg-linear-to-tr from-[#55d2f0] to-[#2ba6de] pb-[3px] text-[32px] text-white">Q</span>
              <button className="ml-auto h-[45px] w-[140px] rounded-[4px] border-2 border-[#dcdcdc] bg-linear-to-b from-white to-[#f2f2f2] pb-[3px] text-[18px]">Alterar avatar</button>
            </div>
            <ProfileForm />
          </div>
        </section>
        <section className="flex pt-[39px]">
          <div className="w-[422px] shrink-0">
            <h2 className="text-[25px] leading-[34px]">Código QR</h2>
            <svg className="mt-10 ml-3 bg-[#f2f2f2]" role="img" aria-label="Código QR" width="133" height="133" viewBox="0 0 33 33" shapeRendering="crispEdges"><path d={qrPath} fill="#141412" /></svg>
          </div>
          <div className="flex-1 pt-[9px]">
            <Toggle id="qr" label="Ativar código QR" />
            <div className="h-[60px]" />
            <Toggle id="auto" label="Aceitar automaticamente" />
            <p className="mt-5 max-w-[710px] text-[15px] leading-[23px] text-[#b0b0b0]">
              Os usuários do MEGA que escanearem o seu código QR serão adicionados automaticamente à sua lista de contatos
            </p>
          </div>
        </section>
      </div>
    </div>
    <div className="absolute top-[83px] right-[2px] bottom-[3px] w-[10px] rounded-full bg-[#e3e3e3]">
      <div className="h-[338px] rounded-full bg-[#707070]" />
    </div>
  </main>
);

/* ---------- Windows taskbar ---------- */

const Weather = () => (
  <svg width="31" height="31" viewBox="0 0 31 31">
    <defs>
      <linearGradient id="sun" x1="0" y1="0" x2="0.600" y2="1"><stop offset="0" stopColor="#f6b93b" /><stop offset="1" stopColor="#f26a0e" /></linearGradient>
      <linearGradient id="cloud" x1="0" y1="0" x2="0" y2="1"><stop offset="0" stopColor="#7ea6ea" /><stop offset="1" stopColor="#cfe0fb" /></linearGradient>
    </defs>
    <circle cx="23" cy="8" r="8" fill="url(#sun)" />
    <circle cx="14" cy="14" r="8" fill="url(#cloud)" /><circle cx="6" cy="19" r="6" fill="url(#cloud)" /><circle cx="24" cy="18.500" r="6.500" fill="url(#cloud)" /><rect x="6" y="18" width="18" height="7" fill="#c3d7f8" />
    <path d="M8.500 16c3 4 6 7 6 10a3.500 3.500 0 0 1-6.500 1c-.5-3 0-8 .5-11zM20 16c4 4 8 7 8 11a4 4 0 0 1-8 0z" fill="#1877f2" />
  </svg>
);

const Start = () => (
  <svg width="30" height="30" viewBox="0 0 30 30">
    <defs><linearGradient id="win" x1="0" y1="0" x2="1" y2="1"><stop offset="0" stopColor="#4cc6f7" /><stop offset="1" stopColor="#0072d4" /></linearGradient></defs>
    <path d="M1 0h13.500v14.500H0V1a1 1 0 0 1 1-1zM15.500 0H29a1 1 0 0 1 1 1v13.500H15.500zM0 15.500h14.500V30H1a1 1 0 0 1-1-1zM15.500 15.500H30V29a1 1 0 0 1-1 1H15.500z" fill="url(#win)" />
  </svg>
);

const Beach = () => (
  <svg width="62" height="32" viewBox="0 0 62 32">
    <path d="M0 31c3-7 8-11 16-12l4 12z" fill="#4aa7d6" /><path d="M4 31c5-5 10-8 16-8l-2 8z" fill="#e8f3f6" />
    <path d="M8 31c3-8 8-13 15-15 6-2 12-1 18-1 8 0 18-1 20 4 1 4-1 9-6 12z" fill="#8f8f8f" />
    <path d="M16 24c4-6 12-8 20-4 8 4 18 0 24-3l-1 9-8 4H20z" fill="#5c5c5e" /><path d="M38 16c8-3 20-3 23 2-6 3-16 3-23-2z" fill="#c4c4c2" />
    <path d="M22 17c4-2 9-2 13 0-4 1-9 2-13 0z" fill="#d8d8d6" />
    <path d="M14 4c1 5 1 10 2 15M23 10l1 9" stroke="#a5814e" strokeWidth="1.700" fill="none" />
    <path d="M14 4c-4-3-5 0-5 4M14 4c3-3 6-1 7 2M14 4l-5-2M14 4l6-2M14 4l-1 6M14 4l3 5M23 10c-3-2-4 0-4 3M23 10c3-2 4 0 5 3M23 10l4-2" stroke="#5d7f35" strokeWidth="1.500" fill="none" />
    <path d="M34 12c5 3 13-1 16-10-7-1-14 4-16 10z" fill="#b0775a" />
    <path d="M34 30c8 1 19 1 25-5" stroke="#e0d3a4" strokeWidth="3" fill="none" />
  </svg>
);

const apps: { name: string; icon: React.ReactNode; mark?: "dot" | "bar" }[] = [
  { name: "Visão de tarefas", icon: <svg width="30" height="30" viewBox="0 0 30 30"><rect x="0" y="8" width="23" height="21" rx="1" fill="#2a2a2a" /><rect x="8" y="1" width="22" height="20" rx="1" fill="#f4f4f4" fillOpacity=".9" /><path d="M8 8h15v13H8z" fill="#a5a5a5" /></svg> },
  { name: "Chat", icon: <svg width="30" height="30" viewBox="0 0 30 30"><defs><linearGradient id="teams" x1="0" y1="0" x2="0.500" y2="1"><stop offset="0" stopColor="#8b83e0" /><stop offset="1" stopColor="#4f4cc0" /></linearGradient></defs><path d="M15 0a15 15 0 1 1-6.500 28.500L1 30l1-8A15 15 0 0 1 15 0z" fill="url(#teams)" /><rect x="7" y="9" width="11" height="12" rx="2" fill="#fff" /><path d="M19 13l5-4v12l-5-4z" fill="#fff" /></svg> },
  { name: "Microsoft Store", icon: <svg width="30" height="30" viewBox="0 0 30 30"><path d="M9 6V2a1.500 1.500 0 0 1 1.500-1.500h9A1.500 1.500 0 0 1 21 2v4" stroke="#21b4ee" strokeWidth="2" fill="none" /><path d="M0 5h30v21a4 4 0 0 1-4 4H4a4 4 0 0 1-4-4z" fill="#17478a" /><path d="M9.500 11h5v5.500h-5z" fill="#f25022" /><path d="M15.500 11h5v5.500h-5z" fill="#7fba00" /><path d="M9.500 17.500h5v5h-5z" fill="#00a4ef" /><path d="M15.500 17.500h5v5h-5z" fill="#ffb900" /></svg> },
  { name: "Explorador de Arquivos", mark: "dot", icon: <svg width="30" height="28" viewBox="0 0 30 28"><path d="M0 2a2 2 0 0 1 2-2h8l3 4v6H0z" fill="#d9980f" /><path d="M1 4h27a2 2 0 0 1 2 2v20a2 2 0 0 1-2 2H2a2 2 0 0 1-2-2V5a1 1 0 0 1 1-1z" fill="#fccb3c" /><path d="M5 27v-5a3 3 0 0 1 3-3h14a3 3 0 0 1 3 3v5z" fill="#0f78c8" /><path d="M10 23.500h10" stroke="#0a4e8c" strokeWidth="1.500" /></svg> },
  { name: "Obsidian", icon: <svg width="22" height="28" viewBox="0 0 22 28"><path d="M11 0l6 5 1 8 3 4-3 7-3 4-11-4-3-6 4-6-1-5z" fill="#8253df" /><path d="M11 0l2 8-1 9-8-6 0-5z" fill="#b39af4" /><path d="M1 18l4-6 7 6 2 9-10-3z" fill="#6a35cc" /><path d="M13 8l5 5-6 4z" fill="#9a74ec" /></svg> },
  { name: "Google Chrome", mark: "bar", icon: <svg width="31" height="30" viewBox="0 0 30 30"><circle cx="15" cy="15" r="15" fill="#fff" /><path d="M15 15 2 7.500a15 15 0 0 1 26 0H15z" fill="#e33b2e" /><path d="M15 7.500h13a15 15 0 0 1-13 22.500l6.500-11.200z" fill="#fcc31e" /><path d="M2 7.500A15 15 0 0 0 15 30l6.500-11.200L8.500 18.800z" fill="#2b9f49" /><circle cx="15" cy="15" r="7.500" fill="#fff" /><circle cx="15" cy="15" r="5.900" fill="#3b7cf0" /></svg> },
  { name: "Visual Studio Code", mark: "dot", icon: <svg width="31" height="30" viewBox="0 0 31 30"><path d="M22 0l8 4v22l-8 4z" fill="#27a5ee" /><path d="M22 0v9L4 23 .5 20.500v-2z" fill="#0b6db8" /><path d="M22 30v-9L4 7 .5 9.500v2z" fill="#1888d3" /></svg> },
  { name: "Bloco de Notas", mark: "dot", icon: <svg width="23" height="32" viewBox="0 0 23 32"><rect y="2" width="23" height="26" rx="2" fill="#54c3e3" /><path d="M3 0v5M7.200 0v5M11.500 0v5M15.800 0v5M20 0v5" stroke="#17607a" strokeWidth="1.700" /><path d="M4.500 10h14M4.500 15.500h14M4.500 21h14" stroke="#12576f" strokeWidth="2" /><path d="M0 28h23v1H0z" fill="#fff" /><path d="M0 29h23v1.500a1 1 0 0 1-1 1H1a1 1 0 0 1-1-1z" fill="#b85c13" /></svg> },
];

const Taskbar = () => (
  <footer className="flex h-[60px] shrink-0 items-center border-t border-[#a9a9a9] bg-[linear-gradient(to_right,#dadada_0%,#dadada_90%,#c9ebc9_95%,#d9f7d9_98%)] pb-px text-[14px] leading-5 text-[#1b1b1b]">
    <button className="flex w-[572px] items-center pl-[25px] text-left">
      <Weather />
      <span className="ml-2 block pb-px">
        <span className="block">28°C</span>
        <span className="block text-[#555]">Panc. de chuva</span>
      </span>
    </button>
    <button aria-label="Iniciar" className="flex w-[56px] justify-center"><Start /></button>
    <label className="ml-1 flex h-[39px] w-[273px] items-center rounded-full border border-[#c9c9c9] bg-[#f3f3f3] pr-[2px] pl-[13px]">
      <svg width="19" height="19" viewBox="0 0 19 19" fill="none" stroke="#222" strokeWidth="1.800"><circle cx="8.500" cy="7.800" r="6.800" /><path d="M13.200 12.800l5 5.200" strokeWidth="2.200" /></svg>
      <input aria-label="Pesquisar" placeholder="Pesquisar" className="ml-3 w-0 flex-1 bg-transparent text-[16px] outline-none placeholder:text-[#606060]" />
      <Beach />
    </label>
    <div className="ml-1 flex items-center">
      {apps.map((a) => (
        <div key={a.name} className="flex w-[55px] justify-center">
          <button aria-label={a.name} className={a.mark === "bar" ? "relative flex h-12 w-12 items-center justify-center rounded-[5px] bg-[#efefef] shadow-[0_0_2px_rgba(0,0,0,0.15)]" : "relative flex h-12 w-12 items-center justify-center"}>
            {a.icon}
            {a.mark === "dot" && <span className="absolute bottom-0 h-1 w-2 rounded-full bg-[#757575]" />}
            {a.mark === "bar" && <span className="absolute bottom-0 h-1 w-5 rounded-full bg-[#0078d4]" />}
            {a.mark === "bar" && <span className="absolute top-[3px] right-[3px] flex size-5 items-center justify-center rounded-full bg-[#0b4a3e] text-[12px] leading-none font-semibold text-[#cfe]">G</span>}
          </button>
        </div>
      ))}
    </div>
    <div className="ml-auto flex items-center pr-[26px]">
      <svg width="14" height="9" viewBox="0 0 14 9"><path d="M1 8l6-6.500L13 8" stroke="#222" strokeWidth="1.700" fill="none" /></svg>
      <svg className="ml-[23px]" width="20" height="16" viewBox="0 0 20 16" fill="none" stroke="#222" strokeWidth="1.400"><path d="M1 6c5-6 13-6 18 0M3.500 8.700c4-4.500 9-4.500 13 0M6.200 11.200c2.500-2.700 5.100-2.700 7.600 0" /><circle cx="10" cy="13.500" r="1.500" fill="#222" stroke="none" /></svg>
      <svg className="ml-[10px]" width="21" height="18" viewBox="0 0 21 18" fill="none" stroke="#222" strokeWidth="1.300"><path d="M1 6.500h3l4.500-4.500v14L4 11.500H1z" strokeLinejoin="round" /><path d="M11.500 6.500c1.200 1.500 1.200 3.500 0 5M14 4c2.700 3 2.700 7 0 10M16.500 1.500c4 4.500 4 10.500 0 15" /></svg>
      <svg className="ml-[10px]" width="20" height="13" viewBox="0 0 20 13"><rect x=".7" y=".7" width="16.500" height="11.600" rx="2.500" fill="none" stroke="#222" strokeWidth="1.400" /><rect x="3" y="3" width="10" height="7" rx="1" fill="#222" /><path d="M18.500 4.500v4" stroke="#222" strokeWidth="2" /></svg>
      <div className="ml-[21px] pb-px text-right"><div>11:02</div><div>09/10/2023</div></div>
      <span className="ml-4 flex size-[19px] items-center justify-center rounded-full bg-[#0078d4] text-[12px] text-white">3</span>
    </div>
  </footer>
);

export default function App() {
  return (
    <div className="flex h-screen w-full flex-col overflow-hidden font-['Open_Sans',sans-serif]">
      <TabStrip />
      <Toolbar />
      <Bookmarks />
      <div className="flex min-h-0 flex-1 font-['Lato',sans-serif]">
        <Rail />
        <Menu />
        <Main />
      </div>
      <Taskbar />
    </div>
  );
}
